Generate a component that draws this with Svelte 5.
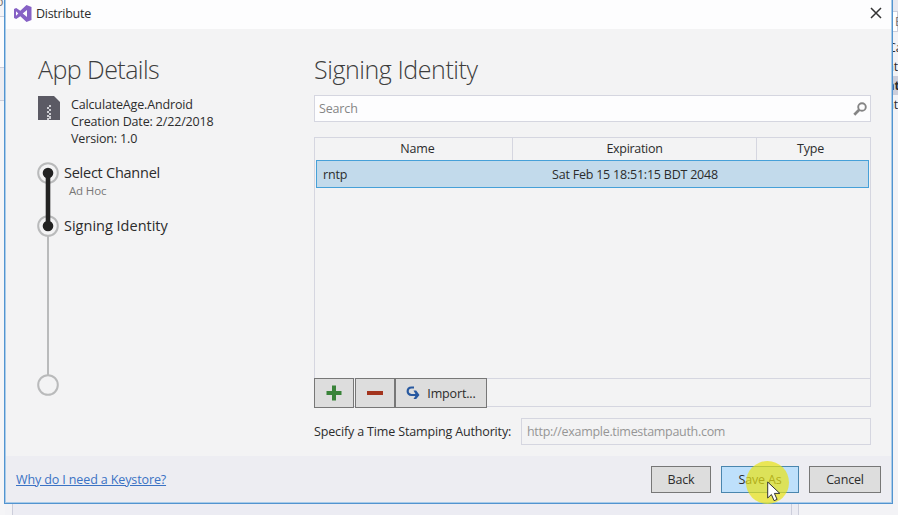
<script>
  const steps = [
    { title: 'Select Channel', note: 'Ad Hoc' },
    { title: 'Signing Identity', note: '' }
  ];
  const behind = [
    { text: 'Ca', bold: false },
    { text: 'at', bold: false },
    { text: 'at', bold: true },
    { text: 'at', bold: false }
  ];
</script>

<div class="desktop">
  <div class="back-left"><span>o</span></div>
  <div class="back-bottom"></div>
  <div class="back-right">
    <div class="top"></div>
    <div class="box">E</div>
    {#each behind as row}
      <div class="row" class:bold={row.bold}><span>{row.text}</span></div>
    {/each}
  </div>

  <div class="dialog">
    <header>
      <svg class="logo" width="18" height="17" viewBox="0 0 18 17">
        <path fill="#8661c5" fill-rule="evenodd" d="M12.500 0 17.500 2v13l-5 2L6.300 11.200 2.200 14 0 13V4l2.200-1L6.300 5.800zM13 5 8.700 8.500 13 12zM2 6.200v4.600L4.300 8.500z" />
      </svg>
      <span class="name">Distribute</span>
      <svg class="close" width="12" height="12" viewBox="0 0 12 12"><path d="M1 1 11 11M11 1 1 11" stroke="#333" stroke-width="1.500" /></svg>
    </header>

    <main>
      <aside>
        <h1 class="t-app">App Details</h1>
        <div class="app">
          <svg width="22" height="24" viewBox="0 0 22 24">
            <path fill="#5b5a64" d="M0 0h16l6 6v18H0z" />
            <path fill="none" stroke="#f4f4f6" stroke-width="1.500" d="M12 9v2M10 11v2M12 13v2M10 15v2M12 17v2M10 19v2M12 20v3M10 22v2" />
          </svg>
          <div class="lines">
            <div class="l1">CalculateAge.Android</div>
            <div class="l2">Creation Date: 2/22/2018</div>
            <div class="l3">Version: 1.0</div>
          </div>
        </div>
        <div class="progress">
          <svg width="22" height="236" viewBox="0 0 22 236">
            <g fill="none" stroke="#b9babb" stroke-width="2">
              <circle cx="11" cy="12" r="9.800" />
              <circle cx="11" cy="65" r="9.800" />
              <path d="M11 75v139" />
              <circle cx="11" cy="224" r="9.800" />
            </g>
            <g fill="#222">
              <circle cx="11" cy="12" r="5.300" />
              <circle cx="11" cy="65" r="5.300" />
              <path d="M8.700 12h4.600v53H8.700z" />
            </g>
          </svg>
          <div class="steps">
            {#each steps as step, i}
              <div class="step">
                <div class="title s{i}">{step.title}</div>
                <div class="note">{step.note}</div>
              </div>
            {/each}
          </div>
        </div>
      </aside>

      <section>
        <h1 class="t-sign">Signing Identity</h1>
        <div class="search">
          <span>Search</span>
          <svg width="14" height="14" viewBox="0 0 14 14" fill="none" stroke="#858585"><circle cx="9" cy="5" r="3.800" stroke-width="1.900" /><path d="M6.200 7.800 1.300 12.700" stroke-width="2.700" /></svg>
        </div>
        <div class="table">
          <div class="head">
            <div class="c1"><span>Name</span></div>
            <div class="c2"><span>Expiration</span></div>
            <div class="c3"><span>Type</span></div>
          </div>
          <div class="selected">
            <div class="v1">rntp</div>
            <div class="v2"><span>Sat Feb 15 18:51:15 BDT 2048</span></div>
          </div>
        </div>
        <div class="tools">
          <button class="tool small"><svg width="16" height="16" viewBox="0 0 16 16"><path fill="#398339" d="M6 .5h4V6h5.500v4H10v5.500H6V10H.5V6H6z" /></svg></button>
          <button class="tool small"><svg width="16" height="16" viewBox="0 0 16 16"><path fill="#a3341e" d="M0 6h16v4H0z" /></svg></button>
          <button class="tool import">
            <svg width="14" height="14" viewBox="0 0 14 14"><path fill="none" stroke="#2859a0" stroke-width="2.200" d="M8 1.500H5.500C.5 1.500.3 9 5.500 9H11" /><path fill="#2859a0" d="M7.500 4.500h2.700L13.500 9l-3.300 4H7.500L10 9z" /></svg>
            <span>Import...</span>
          </button>
        </div>
        <div class="stamp">
          <label for="authority">Specify a Time Stamping Authority:</label>
          <div class="url" id="authority"><span>http://example.timestampauth.com</span></div>
        </div>
      </section>
    </main>

    <footer>
      <a href="#keystore">Why do I need a Keystore?</a>
      <div class="buttons">
        <button class="b-back"><span>Back</span></button>
        <button class="b-save"><span>Save As</span></button>
        <button class="b-cancel"><span>Cancel</span></button>
      </div>
    </footer>
  </div>

  <div class="halo"></div>
  <svg class="cursor" width="14" height="21" viewBox="0 0 14 21"><path fill="#fff" stroke="#333" d="M.7 1v16l3.700-3.500 2.700 6.200 3-1.300-2.700-6H12.800z" /></svg>
</div>

<style>
  :global(body) { margin: 0; }
  .desktop {
    position: relative;
    width: 898px;
    height: 515px;
    overflow: hidden;
    background: #f3f3f6;
    color: #2c2c2c;
    font: 12.500px/17px "Open Sans", "Noto Sans", sans-serif;
    letter-spacing: -0.150px;
  }
  .desktop * { box-sizing: border-box; }
  span, a, label, h1, .lines div, .title, .note { white-space: nowrap; }
  .back-left { position: absolute; left: 0; top: 0; width: 5px; height: 515px; background: linear-gradient(#f5f5f8 0 16px, #cccedb 16px 17px, #fbfbfd 17px 67px, #cccedb 67px 68px, #ededf2 68px 100px, #cccedb 100px 101px, #f5f5f7 101px); overflow: hidden; }
  .back-left span { position: relative; left: -4px; top: -7px; color: #777; }
  .back-bottom { position: absolute; left: 12px; top: 500px; width: 787px; height: 15px; background: #ececf3; border-left: 1px solid #cccedb; border-right: 1px solid #cccedb; }
  .back-bottom::after { content: ""; position: absolute; right: 6px; top: 0; width: 1px; height: 15px; background: #cccedb; }
  .back-right { position: absolute; left: 891px; top: 0; width: 7px; height: 515px; overflow: hidden; }
  .back-right .top { height: 11px; background: #e7e8f0; }
  .back-right .box { height: 21px; border: 1px solid #cccedb; background: #fff; font-size: 12px; line-height: 19px; padding-left: 3px; color: #777; margin-bottom: 6px; }
  .back-right .row { height: 19px; line-height: 19px; }
  .back-right .row span { position: relative; left: -4px; }
  .back-right .row:nth-child(3) span { left: -3px; }
  .back-right .bold { font-weight: 700; background: #cccedb; }
  .dialog {
    position: absolute;
    left: 4px;
    top: -4px;
    width: 889px;
    height: 508px;
    border: 1px solid #5294d0;
    box-shadow: inset 0 0 0 1px #a9cbe8;
    background: #f3f3f4;
    display: flex;
    flex-direction: column;
  }
  header { height: 32px; margin: 0 1px; background: #fdfdfe; display: flex; align-items: center; padding: 0 9px 0 8px; flex: none; }
  header .name { margin-left: 4px; letter-spacing: -0.280px; }
  .logo { margin-top: 1px; }
  .close { margin-left: auto; }
  main { flex: 1; display: flex; padding-left: 32px; }
  aside { width: 277px; }
  h1 { margin: 0; font-weight: 300; font-size: 25px; line-height: 34px; padding-top: 23px; color: #3d3d3d; height: 66px; letter-spacing: -0.430px; }
  .t-app { padding-left: 1px; letter-spacing: -0.550px; }
  .app { display: flex; gap: 11px; height: 54px; padding-left: 1px; }
  .app svg { margin-top: 1px; }
  .lines { padding-top: 1px; }
  .progress { display: flex; gap: 5px; margin-top: 12px; }
  .steps { padding-top: 1px; }
  .step { height: 53px; }
  .title { font-size: 14.500px; line-height: 22px; }
  .s0 { letter-spacing: -0.250px; }
  .s1 { letter-spacing: 0; }
  .note { font-size: 11.500px; line-height: 13px; padding-left: 5px; color: #777; }
  section { width: 557px; }
  .search { height: 27px; border: 1px solid #d5d6e0; background: #fdfdfe; display: flex; justify-content: space-between; align-items: center; padding: 0 3px 0 4px; color: #858585; }
  .table { margin-top: 15px; height: 242px; border: 1px solid #d5d6e0; }
  .head { display: flex; height: 22px; text-align: center; line-height: 21px; }
  .c1 { width: 198px; border-right: 1px solid #d5d6e0; padding-left: 8px; }
  .c2 { width: 244px; border-right: 1px solid #d5d6e0; letter-spacing: -0.300px; }
  .c3 { flex: 1; padding-right: 6px; }
  .selected { height: 28px; margin: 0 1px; border: 1px solid #46a0d8; background: #c2daeb; display: flex; line-height: 27px; }
  .v1 { width: 195px; padding-left: 6px; }
  .v2 { width: 246px; text-align: center; letter-spacing: -0.220px; }
  .tools { display: flex; height: 29px; border: solid #d5d6e0; border-width: 0 1px 1px 0; margin-top: -1px; }
  button { font: inherit; letter-spacing: inherit; color: inherit; padding: 0; margin: 0; display: flex; align-items: center; justify-content: center; border: 1px solid #777; background: #dddddd; }
  .tool { height: 30px; }
  .small { width: 40px; margin-right: 1px; }
  .import { width: 92px; gap: 7px; margin-left: -1px; }
  .stamp { display: flex; justify-content: space-between; margin-top: 11px; height: 27px; line-height: 27px; }
  .url { width: 350px; border: 1px solid #d5d6e0; color: #969696; padding-left: 5px; line-height: 25px; letter-spacing: -0.300px; }
  footer { height: 46px; margin: 0 1px 1px; background: #ededf2; display: flex; align-items: center; justify-content: space-between; padding: 0 10px; flex: none; }
  a { color: #3a72c4; text-decoration: underline; letter-spacing: -0.120px; }
  .buttons { display: flex; }
  .buttons button { height: 27px; }
  .b-back { width: 60px; margin-right: 10px; }
  .buttons .b-save { width: 78px; margin-right: 10px; background: #bee0fb; border-color: #4a86ae; }
  .b-cancel { width: 72px; }
  .halo { position: absolute; left: 746px; top: 461px; width: 43px; height: 43px; border-radius: 50%; background: rgba(232, 226, 20, 0.700); }
  .cursor { position: absolute; left: 767px; top: 481px; }
</style>
